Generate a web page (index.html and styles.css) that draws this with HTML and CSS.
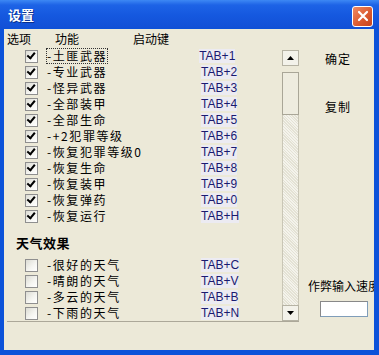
FILE: index.html
```html
<!DOCTYPE html>
<html lang="zh-CN">
<head>
    <meta charset="UTF-8">
    <title>设置</title>
    <link rel="stylesheet" href="styles.css">
</head>
<body>
    <div class="window">
        <div class="titlebar">
            <span class="title">设置</span>
            <span class="close">
                <svg width="12" height="12" viewBox="0 0 12 12"><path d="M2 2 L10 10 M10 2 L2 10" stroke="#fff" stroke-width="2.2" stroke-linecap="round"/></svg>
            </span>
        </div>
        <div class="content">
            <div class="list-col">
                <div class="head">
                    <span class="h-opt">选项</span>
                    <span class="h-func">功能</span>
                    <span class="h-key">启动键</span>
                </div>
                <div class="panel">
                    <div class="items">
                        <div class="row"><span class="cb on"></span><span class="label focus">-土匪武器</span><span class="key">TAB+1</span></div>
                        <div class="row"><span class="cb on"></span><span class="label">-专业武器</span><span class="key">TAB+2</span></div>
                        <div class="row"><span class="cb on"></span><span class="label">-怪异武器</span><span class="key">TAB+3</span></div>
                        <div class="row"><span class="cb on"></span><span class="label">-全部装甲</span><span class="key">TAB+4</span></div>
                        <div class="row"><span class="cb on"></span><span class="label">-全部生命</span><span class="key">TAB+5</span></div>
                        <div class="row"><span class="cb on"></span><span class="label">-+2犯罪等级</span><span class="key">TAB+6</span></div>
                        <div class="row"><span class="cb on"></span><span class="label">-恢复犯罪等级0</span><span class="key">TAB+7</span></div>
                        <div class="row"><span class="cb on"></span><span class="label">-恢复生命</span><span class="key">TAB+8</span></div>
                        <div class="row"><span class="cb on"></span><span class="label">-恢复装甲</span><span class="key">TAB+9</span></div>
                        <div class="row"><span class="cb on"></span><span class="label">-恢复弹药</span><span class="key">TAB+0</span></div>
                        <div class="row"><span class="cb on"></span><span class="label">-恢复运行</span><span class="key">TAB+H</span></div>
                        <div class="group">天气效果</div>
                        <div class="row"><span class="cb"></span><span class="label">-很好的天气</span><span class="key">TAB+C</span></div>
                        <div class="row"><span class="cb"></span><span class="label">-晴朗的天气</span><span class="key">TAB+V</span></div>
                        <div class="row"><span class="cb"></span><span class="label">-多云的天气</span><span class="key">TAB+B</span></div>
                        <div class="row"><span class="cb"></span><span class="label">-下雨的天气</span><span class="key">TAB+N</span></div>
                    </div>
                    <div class="scrollbar">
                        <div class="sb-btn">
                            <svg width="7" height="4" viewBox="0 0 7 4"><path d="M0 4 L3.5 0 L7 4 Z" fill="#000"/></svg>
                        </div>
                        <div class="sb-thumb"></div>
                        <div class="sb-track"></div>
                        <div class="sb-btn">
                            <svg width="7" height="4" viewBox="0 0 7 4"><path d="M0 0 L3.5 4 L7 0 Z" fill="#000"/></svg>
                        </div>
                    </div>
                </div>
            </div>
            <div class="side">
                <div class="btn-text ok">确定</div>
                <div class="btn-text copy">复制</div>
                <div class="spacer"></div>
                <div class="speed-label">作弊输入速度</div>
                <div class="speed-input"></div>
            </div>
        </div>
    </div>
</body>
</html>
```

FILE: styles.css
```css
body {
    margin: 0;
    background: #0b4fd6;
    font-family: "Noto Sans CJK SC", "Liberation Sans", sans-serif;
}
.window {
    width: 379px;
    height: 355px;
    background: #0c52d9;
    display: flex;
    flex-direction: column;
    overflow: hidden;
}
.titlebar {
    height: 28px;
    flex: none;
    display: flex;
    align-items: center;
    justify-content: space-between;
    padding: 0 6px 0 8px;
    background: linear-gradient(to bottom, #3d88f4 0%, #1d63e6 18%, #1558df 55%, #1250d6 100%);
}
.title {
    color: #fff;
    font-size: 13px;
    font-weight: bold;
    text-shadow: 1px 1px 0 #0a2e8c;
}
.close {
    width: 19px;
    height: 19px;
    margin-top: 4px;
    border: 1px solid #fff;
    border-radius: 3px;
    background: linear-gradient(135deg, #f08a62 0%, #d9582e 60%, #c8441e 100%);
    display: flex;
    align-items: center;
    justify-content: center;
}
.content {
    flex: 1;
    margin: 1px 5px 5px 4px;
    background: #ece9d8;
    display: flex;
}
.list-col {
    width: 295px;
    flex: none;
    display: flex;
    flex-direction: column;
}
.head {
    height: 19px;
    display: flex;
    align-items: center;
    font-size: 12px;
    color: #000;
}
.h-opt {
    margin-left: 3px;
    width: 48px;
}
.h-func {
    width: 78px;
}
.panel {
    height: 273px;
    display: flex;
    border-bottom: 1px solid #aca899;
    margin-left: 3px;
}
.items {
    flex: 1;
    overflow: hidden;
}
.row {
    height: 16px;
    display: flex;
    align-items: center;
    padding-left: 18px;
}
.cb {
    width: 11px;
    height: 11px;
    border: 1px solid #8f8f8f;
    background: linear-gradient(135deg, #dcdcd4 0%, #f6f6f2 60%, #fff 100%);
    flex: none;
    position: relative;
}
.cb.on::after {
    content: "";
    position: absolute;
    left: 2px;
    top: 0px;
    width: 3px;
    height: 6px;
    border-right: 2px solid #000;
    border-bottom: 2px solid #000;
    transform: rotate(40deg);
    transform-origin: 60% 60%;
}
.label {
    width: 153px;
    margin-left: 8px;
    font-size: 12px;
    letter-spacing: 1.6px;
    color: #000;
    line-height: 14px;
    white-space: nowrap;
    border: 1px solid transparent;
}
.label.focus {
    width: auto;
    border: 1px dotted #333;
}
.row .label.focus + .key {
    margin-left: 91px;
}
.key {
    font-family: "Liberation Sans", sans-serif;
    font-size: 12px;
    color: #1a1a70;
    background: #ecebf2;
}
.group {
    height: 33px;
    display: flex;
    align-items: center;
    padding-left: 9px;
    padding-top: 4px;
    box-sizing: border-box;
    font-size: 13px;
    font-weight: bold;
    letter-spacing: 0.5px;
}
.scrollbar {
    width: 17px;
    flex: none;
    display: flex;
    flex-direction: column;
    padding-top: 2px;
}
.sb-btn {
    height: 14px;
    border: 1px solid #b6b3a4;
    background: #f3f2ea;
    display: flex;
    align-items: center;
    justify-content: center;
    box-sizing: content-box;
}
.sb-thumb {
    height: 41px;
    margin-top: 6px;
    border: 1px solid #a9a697;
    background: #eeecdf;
}
.sb-track {
    flex: 1;
    border-left: 1px solid #c9c6b6;
    border-right: 1px solid #c9c6b6;
    background-color: #f4f3ec;
    background-image: repeating-linear-gradient(45deg, #e4e2d4 0 1px, transparent 1px 2px);
}
.side {
    flex: 1;
    display: flex;
    flex-direction: column;
    font-size: 12px;
    color: #000;
    overflow: hidden;
}
.btn-text {
    margin-left: 26px;
    letter-spacing: 1px;
}
.ok {
    margin-top: 21px;
}
.copy {
    margin-top: 31px;
}
.spacer {
    flex: 1;
}
.speed-label {
    margin-left: 9px;
    white-space: nowrap;
}
.speed-input {
    width: 46px;
    height: 14px;
    margin: 7px 0 33px 21px;
    border: 1px solid #7f9db9;
    border-top-color: #888;
    border-left-color: #888;
    background: #fff;
}
```
